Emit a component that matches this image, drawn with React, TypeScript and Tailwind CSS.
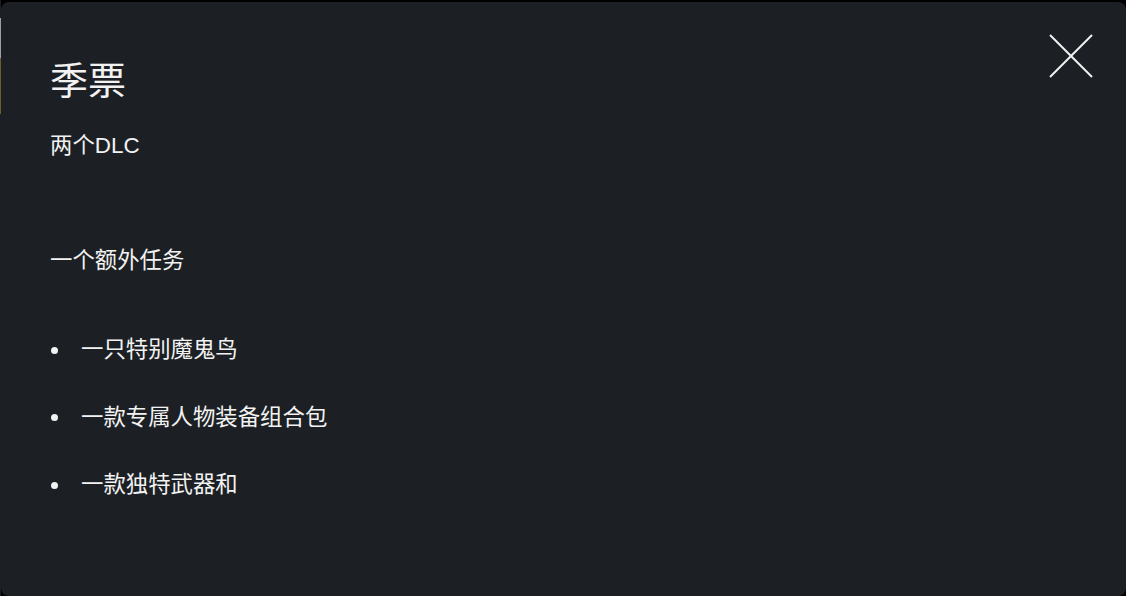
const perks = ["一只特别魔鬼鸟", "一款专属人物装备组合包", "一款独特武器和"]

function CloseIcon() {
  return (
    <svg width="44" height="44" viewBox="0 0 44 44" fill="none" stroke="#f2f2f2" strokeWidth="2">
      <line x1="1" y1="1" x2="43" y2="43" />
      <line x1="43" y1="1" x2="1" y2="43" />
    </svg>
  )
}

export default function App() {
  return (
    <div className="flex w-[1126px] h-[596px] bg-black overflow-hidden">
      {/* page behind the modal */}
      <div className="flex flex-col w-[1px] bg-[#1c2024]">
        <div className="h-[18px]" />
        <div className="h-[40px] bg-[#9aa0a4]" />
        <div className="h-[56px] bg-[#6b5f2a]" />
      </div>

      {/* Modal */}
      <div
        className="relative flex-1 mt-[2px] rounded-[8px] bg-[#1c2024] pl-[49px] pt-[56px] text-[#f2f2f2]"
        style={{ fontFamily: '"Liberation Sans", "Noto Sans CJK SC", sans-serif' }}
      >
        <button className="absolute top-[32px] right-[33px]" aria-label="close">
          <CloseIcon />
        </button>

        <h2 className="text-[38px] leading-[46px] font-normal">季票</h2>
        <p className="mt-[26px] text-[22.4px] leading-[32px]">两个DLC</p>
        <p className="mt-[83px] text-[22.4px] leading-[32px]">一个额外任务</p>

        <ul className="mt-[57px] flex flex-col gap-[35.5px]">
          {perks.map((perk) => (
            <li key={perk} className="flex items-center text-[22.4px] leading-[32px]">
              <span className="w-[7px] h-[7px] rounded-full bg-[#f2f2f2] ml-[1px] mr-[23px]" />
              {perk}
            </li>
          ))}
        </ul>
      </div>
    </div>
  )
}
